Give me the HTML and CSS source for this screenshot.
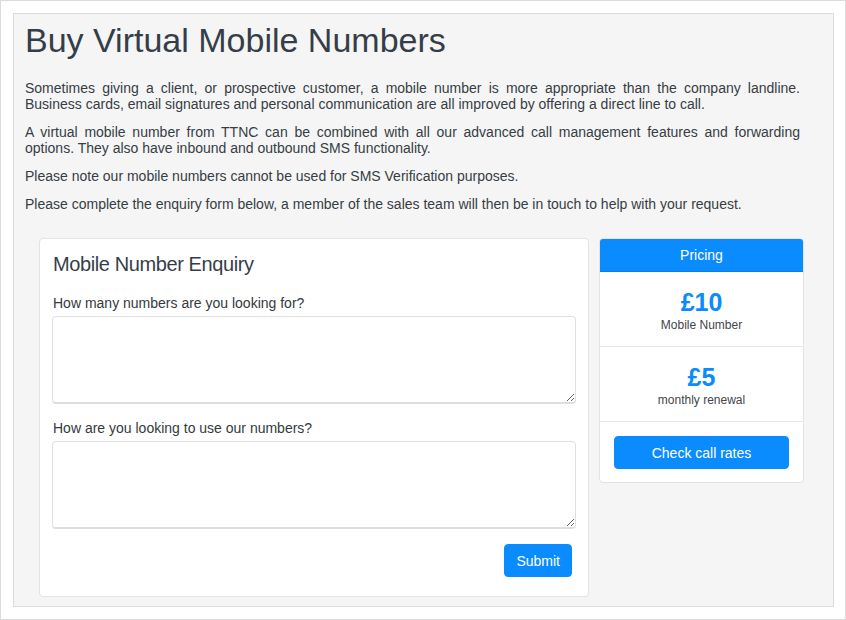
FILE: index.html
```html
<!DOCTYPE html>
<html lang="en">
<head>
<meta charset="utf-8">
<title>Buy Virtual Mobile Numbers</title>
<link rel="stylesheet" href="styles.css">
</head>
<body>
<div class="frame">
  <div class="well">
    <h1 class="title">Buy Virtual Mobile Numbers</h1>
    <p class="text">Sometimes giving a client, or prospective customer, a mobile number is more appropriate than the company landline. Business cards, email signatures and personal communication are all improved by offering a direct line to call.</p>
    <p class="text">A virtual mobile number from TTNC can be combined with all our advanced call management features and forwarding options. They also have inbound and outbound SMS functionality.</p>
    <p class="text">Please note our mobile numbers cannot be used for SMS Verification purposes.</p>
    <p class="text">Please complete the enquiry form below, a member of the sales team will then be in touch to help with your request.</p>

    <div class="row">
      <form class="card">
        <h2 class="card-title">Mobile Number Enquiry</h2>
        <label class="label" for="q1">How many numbers are you looking for?</label>
        <textarea class="field" id="q1"></textarea>
        <label class="label" for="q2">How are you looking to use our numbers?</label>
        <textarea class="field" id="q2"></textarea>
        <div class="actions">
          <button type="button" class="btn btn-submit">Submit</button>
        </div>
      </form>

      <div class="pricing">
        <div class="pricing-head">Pricing</div>
        <div class="price-block">
          <div class="price">£10</div>
          <div class="price-label">Mobile Number</div>
        </div>
        <div class="price-block">
          <div class="price">£5</div>
          <div class="price-label">monthly renewal</div>
        </div>
        <div class="price-foot">
          <button type="button" class="btn btn-rates">Check call rates</button>
        </div>
      </div>
    </div>
  </div>
</div>
</body>
</html>
```

FILE: styles.css
```css
* { box-sizing: border-box; }

html, body {
  margin: 0;
  padding: 0;
  background: #ffffff;
}

body {
  font-family: "Liberation Sans", Arial, Helvetica, sans-serif;
  color: #343a40;
  font-size: 14px;
  line-height: 16px;
}

.frame {
  width: 846px;
  height: 620px;
  border: 1px solid #dcdcdc;
  padding: 12px 11px 12px 12px;
}

.well {
  height: 100%;
  background: #f5f5f5;
  border: 1px solid #dcdcdc;
  padding: 6px 33px 0 11px;
}

.title {
  margin: 0 0 20px 0;
  font-size: 34px;
  line-height: 40px;
  font-weight: normal;
  color: #353e48;
}

.text {
  margin: 0 0 12px 0;
  text-align: justify;
  color: #363d44;
}

.row {
  display: flex;
  align-items: flex-start;
  gap: 10px;
  margin: 26px -4px 0 14px;
}

.card {
  width: 550px;
  flex: none;
  background: #ffffff;
  border: 1px solid #e3e3e3;
  border-radius: 4px;
  padding: 13px 12px 19px 12px;
  margin: 0;
}

.card-title {
  margin: 0 0 19px 1px;
  font-size: 20px;
  line-height: 24px;
  font-weight: normal;
  letter-spacing: -0.4px;
  color: #353e48;
}

.label {
  display: block;
  margin: 0 0 5px 1px;
  color: #343a40;
}

.field {
  display: block;
  width: 524px;
  height: 88px;
  margin: 0 0 16px 0;
  border: 1px solid #e0e0e0;
  border-bottom: 2px solid #dedede;
  border-radius: 4px;
  background: #ffffff;
  resize: vertical;
  font-family: inherit;
  font-size: 14px;
}

.field + .actions { margin-top: -1px; }

.actions {
  display: flex;
  justify-content: flex-end;
  padding-right: 4px;
}

.btn {
  font-family: inherit;
  font-size: 14px;
  line-height: 16px;
  color: #ffffff;
  background: #0a8bfe;
  border: 1px solid #0a8bfe;
  border-radius: 4px;
  cursor: pointer;
}

.btn-submit {
  height: 33px;
  padding: 0 11px;
}

.pricing {
  width: 205px;
  flex: none;
  background: #ffffff;
  border: 1px solid #e3e3e3;
  border-radius: 4px;
  overflow: hidden;
}

.pricing-head {
  margin: -1px -1px 0 -1px;
  height: 34px;
  padding-top: 9px;
  background: #0a8bfe;
  border-bottom: 1px solid #0a7ee6;
  color: #ffffff;
  text-align: center;
  border-radius: 4px 4px 0 0;
}

.price-block {
  padding: 15px 0 13px 0;
  border-bottom: 1px solid #e6e6e6;
  text-align: center;
}

.price {
  font-size: 25px;
  line-height: 30px;
  font-weight: bold;
  color: #0a8bfe;
}

.price-label {
  font-size: 12px;
  line-height: 16px;
  color: #3f454b;
}

.price-foot {
  padding: 14px 14px 13px 14px;
}

.btn-rates {
  display: block;
  width: 100%;
  height: 33px;
}
```
